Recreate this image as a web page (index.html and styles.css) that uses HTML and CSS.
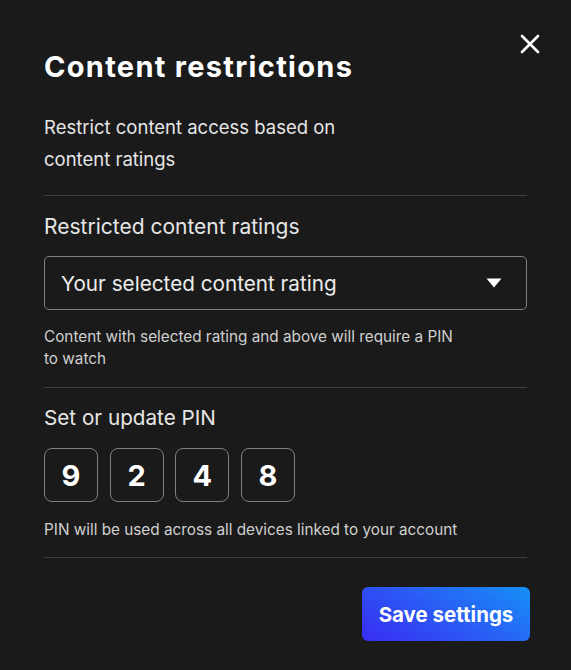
FILE: index.html
```html
<!DOCTYPE html>
<html lang="en">
<head>
<meta charset="utf-8">
<title>Content restrictions</title>
<link rel="stylesheet" href="styles.css">
</head>
<body>
<div class="modal">
  <button class="close" aria-label="Close">
    <svg width="20" height="20" viewBox="0 0 20 20"><path d="M2 2 L18 18 M18 2 L2 18" stroke="#ffffff" stroke-width="2.6" stroke-linecap="round" fill="none"/></svg>
  </button>
  <h1 class="title">Content restrictions</h1>
  <p class="subtitle">Restrict content access based on<br>content ratings</p>
  <hr class="divider">
  <section class="section">
    <div class="label">Restricted content ratings</div>
    <div class="select">
      <span class="select-text">Your selected content rating</span>
      <svg class="caret" width="16" height="10" viewBox="0 0 16 10"><path d="M0.5 0.5 L15.5 0.5 L8 9.5 Z" fill="#ffffff"/></svg>
    </div>
    <p class="help">Content with selected rating and above will require a PIN<br>to watch</p>
  </section>
  <hr class="divider divider-tight">
  <section class="section">
    <div class="label label-pin">Set or update PIN</div>
    <div class="pin">
      <div class="pin-box">9</div>
      <div class="pin-box">2</div>
      <div class="pin-box">4</div>
      <div class="pin-box">8</div>
    </div>
    <p class="help help-pin">PIN will be used across all devices linked to your account</p>
  </section>
  <hr class="divider divider-last">
  <div class="actions">
    <button class="save">Save settings</button>
  </div>
</div>
</body>
</html>
```

FILE: styles.css
```css
html, body {
  margin: 0;
  padding: 0;
  background: #1a1a1a;
}
body {
  font-family: Inter, "Noto Sans", "Liberation Sans", sans-serif;
  color: #f0f0f0;
}
.modal {
  position: relative;
  width: 571px;
  height: 670px;
  box-sizing: border-box;
  padding: 49px 44px 0 44px;
  display: flex;
  flex-direction: column;
}
.close {
  position: absolute;
  top: 34px;
  left: 520px;
  width: 20px;
  height: 20px;
  padding: 0;
  border: 0;
  background: transparent;
  display: flex;
}
.title {
  margin: 0;
  font-size: 29px;
  line-height: 35px;
  font-weight: 700;
  color: #ffffff;
  letter-spacing: 1.3px;
}
.subtitle {
  margin: 27px 0 0 0;
  font-size: 18.5px;
  line-height: 32px;
  color: #e6e6e6;
}
.divider {
  margin: 20px 0 0 0;
  border: 0;
  height: 1px;
  background: #3d3d3d;
}
.divider-tight {
  margin-top: 17px;
}
.divider-last {
  margin-top: 16px;
}
.section {
  display: flex;
  flex-direction: column;
}
.label {
  margin-top: 17px;
  font-size: 21px;
  line-height: 28px;
  color: #e6e6e6;
}
.label-pin {
  margin-top: 16px;
  font-size: 20.7px;
}
.select {
  margin-top: 15px;
  height: 54px;
  box-sizing: border-box;
  border: 1.5px solid #808080;
  border-radius: 5px;
  display: flex;
  align-items: center;
  justify-content: space-between;
  padding: 0 24px 0 16px;
}
.select-text {
  font-size: 20.7px;
  color: #ececec;
}
.caret {
  display: block;
}
.help {
  margin: 16px 0 0 0;
  font-size: 15.3px;
  line-height: 22px;
  color: #d0d0d0;
}
.help-pin {
  margin-top: 17px;
}
.pin {
  margin-top: 16px;
  display: flex;
  gap: 11.7px;
}
.pin-box {
  width: 54px;
  height: 54px;
  box-sizing: border-box;
  border: 1.5px solid #808080;
  border-radius: 8px;
  display: flex;
  align-items: center;
  justify-content: center;
  font-size: 29px;
  font-weight: 700;
  color: #ffffff;
}
.actions {
  margin-top: 29px;
  display: flex;
  justify-content: flex-end;
  margin-right: -3px;
}
.save {
  width: 168px;
  height: 54px;
  border: 0;
  border-radius: 6px;
  background: linear-gradient(30deg, #3a2cf3 0%, #2a5cf5 50%, #1690f7 100%);
  color: #ffffff;
  font-family: Inter, "Noto Sans", "Liberation Sans", sans-serif;
  font-size: 20.5px;
  font-weight: 700;
  padding: 0;
}
```
